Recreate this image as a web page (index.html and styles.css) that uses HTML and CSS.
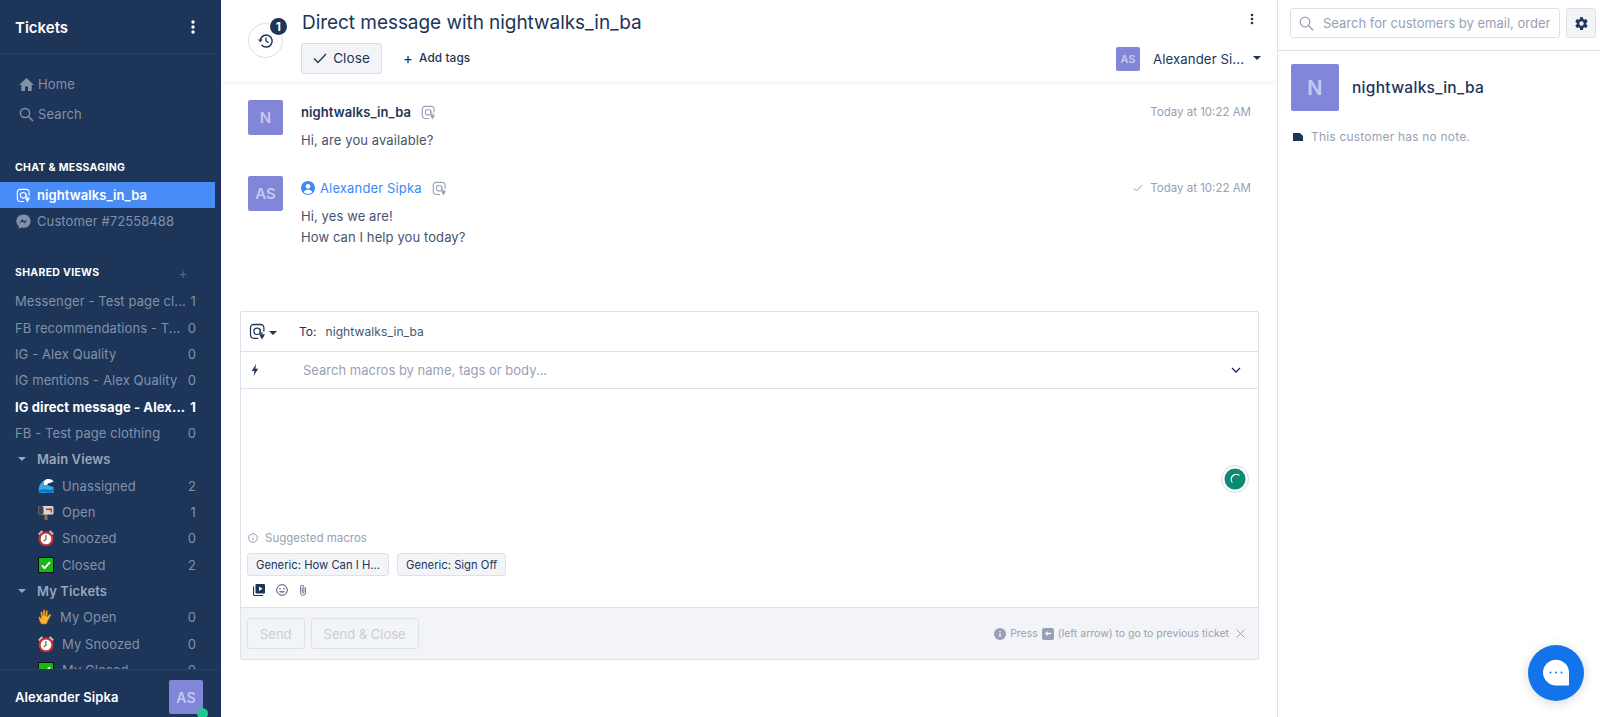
FILE: index.html
```html
<!DOCTYPE html>
<html lang="en">
<head>
<meta charset="utf-8">
<title>Tickets</title>
<link rel="stylesheet" href="styles.css">
</head>
<body>
<svg class="defs" width="0" height="0" aria-hidden="true">
  <symbol id="ig" viewBox="0 0 16 16">
    <path d="M8.600 14.400H4.400a3 3 0 0 1-3-3V4.400a3 3 0 0 1 3-3h6.600a3 3 0 0 1 3 3V8" fill="none" stroke="currentColor" stroke-width="1.200"/>
    <circle cx="7.600" cy="7.800" r="3" fill="none" stroke="currentColor" stroke-width="1.100"/>
    <path d="M10.600 5.500v3.400c0 1.300 2 1.300 2-.3" fill="none" stroke="currentColor" stroke-width="1"/>
    <path d="M9.500 10.500h5.500l-2.700 5z" fill="currentColor"/>
  </symbol>
  <symbol id="clock" viewBox="0 0 18 18">
    <path d="M1 5l4-4M17 5l-4-4" stroke="#c3c7cf" stroke-width="2.400"/>
    <circle cx="9" cy="10" r="7.200" fill="#fff" stroke="#d12f2f" stroke-width="2.400"/>
    <path d="M9 5.500V10l-2.500 2.500" stroke="#555" stroke-width="1.300" fill="none"/>
  </symbol>
  <symbol id="check" viewBox="0 0 16 16">
    <rect width="16" height="16" fill="#0a0f14"/>
    <rect x="1" y="1" width="14" height="14" fill="#16b816"/>
    <path d="M4 8.500l2.600 2.600L12 5.200" fill="none" stroke="#fff" stroke-width="1.900"/>
  </symbol>
</svg>

<div class="app">
  <aside class="sidebar">
    <header class="side-head">
      <h1>Tickets</h1>
      <svg class="kebab" width="4" height="14" viewBox="0 0 4 14"><circle cx="2" cy="2" r="1.700"/><circle cx="2" cy="7" r="1.700"/><circle cx="2" cy="12" r="1.700"/></svg>
    </header>
    <div class="side-scroll">
      <nav class="side-nav">
        <a class="nav-row"><svg width="15" height="13" viewBox="0 0 16 14"><path d="M6.400 14V9.200h3.200V14h4V7.500H16L8 0 0 7.500h2.400V14z" fill="currentColor"/></svg>Home</a>
        <a class="nav-row"><svg width="15" height="15" viewBox="0 0 15 15"><circle cx="6" cy="6" r="4.600" fill="none" stroke="currentColor" stroke-width="1.500"/><path d="M9.500 9.500l4.500 4.500" stroke="currentColor" stroke-width="1.600"/></svg>Search</a>
      </nav>

      <h2 class="section-title first">CHAT &amp; MESSAGING</h2>
      <a class="chat-row active"><svg class="chat-ico" width="15" height="15"><use href="#ig"/></svg>nightwalks_in_ba</a>
      <a class="chat-row"><svg class="chat-ico" width="15" height="15" viewBox="0 0 16 16"><path d="M8 .5C3.700.5.400 3.600.400 7.600c0 2.200 1 4 2.600 5.300V15.600l2.400-1.300c.8.2 1.700.4 2.600.4 4.300 0 7.600-3.100 7.600-7.100S12.300.5 8 .5z" fill="currentColor"/><path d="M3.400 10l3.200-4.400 2.400 2.200 2.800-2.200L9.400 10 7 7.900z" fill="#1c3559"/></svg>Customer #72558488</a>

      <h2 class="section-title second">SHARED VIEWS<span class="plus">+</span></h2>
      <ul class="views">
        <li class="view"><span class="view-name">Messenger - Test page cl...</span><span class="count">1</span></li>
        <li class="view"><span class="view-name">FB recommendations - T...</span><span class="count">0</span></li>
        <li class="view"><span class="view-name">IG - Alex Quality</span><span class="count">0</span></li>
        <li class="view"><span class="view-name">IG mentions - Alex Quality</span><span class="count">0</span></li>
        <li class="view strong"><span class="view-name">IG direct message - Alex...</span><span class="count">1</span></li>
        <li class="view"><span class="view-name">FB - Test page clothing</span><span class="count">0</span></li>
        <li class="view group"><i class="caret"></i>Main Views</li>
        <li class="view sub">
          <svg class="emoji" width="16" height="16" viewBox="0 0 16 16"><path d="M1 15C-.5 8 4 1 11 1c2.500 0 4.500 1 4.500 3L12 3.500c-2 0-3.500 1.500-3 3.500l6.500 2V15z" fill="#35a8e6"/><path d="M8 1.500c2-.8 5-.6 7.500 2L12 5C10 5 9 6 9.500 7L6 7C5.500 4.500 6 2.500 8 1.500z" fill="#fff"/><path d="M1 15c3-1 5-1 7-.5s5 .5 7.500-.5V11c-3 1.500-5 1-7 .5S3 11 1 13z" fill="#0f72bd"/></svg>
          <span class="view-name">Unassigned</span><span class="count">2</span></li>
        <li class="view sub">
          <svg class="emoji" width="16" height="16" viewBox="0 0 16 16"><rect x="6.500" y="8" width="3" height="8" fill="#9b6a3c"/><rect x=".5" y="2" width="15" height="8.500" rx="1.500" fill="#d5d9de"/><rect x=".5" y="2" width="5" height="8.500" rx="2" fill="#3d4249"/><rect x="8" y="4.500" width="6" height="1.600" fill="#d92c2c"/><rect x="12.500" y="4.500" width="1.600" height="4" fill="#d92c2c"/></svg>
          <span class="view-name">Open</span><span class="count">1</span></li>
        <li class="view sub"><svg class="emoji" width="16" height="16"><use href="#clock"/></svg><span class="view-name">Snoozed</span><span class="count">0</span></li>
        <li class="view sub"><svg class="emoji" width="16" height="16"><use href="#check"/></svg><span class="view-name">Closed</span><span class="count">2</span></li>
        <li class="view group"><i class="caret"></i>My Tickets</li>
        <li class="view sub tight">
          <svg class="emoji" width="15" height="16" viewBox="0 0 15 16"><path d="M3.500 15C1.500 12.500 1 10 .8 8.500c0-1 1.200-1 1.600-.2l1 1.700L2.800 3.500c0-1 1.300-1.100 1.500-.1L5 7l.3-5.600c.1-1 1.500-1 1.600 0L7.200 7l1-4.900c.2-1 1.500-.8 1.500.2L9 8l2.300-2.500c.8-.8 2 0 1.400 1L10 11.500 8.500 15z" fill="#f7b531" stroke="#a8641a" stroke-width=".6"/></svg>
          <span class="view-name">My Open</span><span class="count">0</span></li>
        <li class="view sub"><svg class="emoji" width="16" height="16"><use href="#clock"/></svg><span class="view-name">My Snoozed</span><span class="count">0</span></li>
        <li class="view sub"><svg class="emoji" width="16" height="16"><use href="#check"/></svg><span class="view-name">My Closed</span><span class="count">0</span></li>
      </ul>
    </div>
    <footer class="side-foot">
      <span class="me">Alexander Sipka</span>
      <span class="avatar av-foot">AS<i class="online"></i></span>
    </footer>
  </aside>

  <main class="main">
    <header class="ticket-head">
      <div class="history">
        <svg width="16" height="16" viewBox="0 0 16 16"><path d="M2.300 6.800A6 6 0 1 1 3.600 12" fill="none" stroke="#1c3559" stroke-width="1.500"/><path d="M0 6.500h4.600L2.300 9.300z" fill="#1c3559"/><path d="M8 4.500V8l2.600 1.600" fill="none" stroke="#1c3559" stroke-width="1.300"/></svg>
        <span class="badge">1</span>
      </div>
      <div class="head-body">
        <div class="head-top">
          <h2 class="ticket-title">Direct message with nightwalks_in_ba</h2>
          <svg class="kebab-dark" width="4" height="12" viewBox="0 0 4 12"><circle cx="2" cy="2" r="1.300"/><circle cx="2" cy="6" r="1.300"/><circle cx="2" cy="10" r="1.300"/></svg>
        </div>
        <div class="head-bottom">
          <button class="btn-close"><svg width="14" height="11" viewBox="0 0 14 11"><path d="M1 5.500l4 4L13 1" fill="none" stroke="#1c3559" stroke-width="1.300"/></svg>Close</button>
          <span class="add-tags"><span class="add-plus">+</span>Add tags</span>
          <span class="assignee"><span class="avatar av-small">AS</span><span class="assignee-name">Alexander Si...</span><i class="caret dark"></i></span>
        </div>
      </div>
    </header>

    <section class="messages">
      <article class="msg">
        <span class="avatar av-msg">N</span>
        <div class="msg-body">
          <div class="msg-head">
            <span class="author">nightwalks_in_ba</span>
            <svg class="src" width="15" height="15"><use href="#ig"/></svg>
            <span class="time">Today at 10:22 AM</span>
          </div>
          <p class="msg-text">Hi, are you available?</p>
        </div>
      </article>
      <article class="msg">
        <span class="avatar av-msg">AS</span>
        <div class="msg-body">
          <div class="msg-head">
            <svg class="agent-ico" width="14" height="14" viewBox="0 0 14 14"><circle cx="7" cy="7" r="7" fill="#3b89f5"/><circle cx="7" cy="5.300" r="2.400" fill="#fff"/><path d="M2.700 11.200c.8-2 2.400-2.800 4.300-2.800s3.500.8 4.300 2.800A6 6 0 0 1 7 13a6 6 0 0 1-4.300-1.800z" fill="#fff"/></svg>
            <span class="author agent">Alexander Sipka</span>
            <svg class="src" width="15" height="15"><use href="#ig"/></svg>
            <svg class="sent" width="10" height="8" viewBox="0 0 10 8"><path d="M.8 4.200l2.800 2.800L9.200.8" fill="none" stroke="#97a1b3" stroke-width="1"/></svg>
            <span class="time with-check">Today at 10:22 AM</span>
          </div>
          <p class="msg-text">Hi, yes we are!<br>How can I help you today?</p>
        </div>
      </article>
    </section>

    <section class="editor">
      <div class="ed-row ed-to">
        <svg class="ed-ig" width="17" height="17"><use href="#ig"/></svg><i class="caret dark"></i>
        <span class="to-label">To:</span><span class="to-name">nightwalks_in_ba</span>
      </div>
      <div class="ed-row ed-macro">
        <svg class="bolt" width="8" height="12" viewBox="0 0 8 12"><path d="M5 0L.8 7h2.700L2.600 12 7.200 4.700H4.400z" fill="#1c3559"/></svg>
        <span class="macro-ph">Search macros by name, tags or body...</span>
        <svg class="chev" width="10" height="6" viewBox="0 0 10 6"><path d="M1 1l4 4 4-4" fill="none" stroke="#1c3559" stroke-width="1.300"/></svg>
      </div>
      <div class="ed-body">
        <div class="ed-space">
          <span class="grammarly"><svg width="22" height="22" viewBox="0 0 22 22"><circle cx="11" cy="11" r="10.500" fill="#0b8a73"/><path d="M15 7.200A5 5 0 0 0 7.300 10c-.4 1.500 0 3 .7 4" fill="none" stroke="#fff" stroke-width="1.200" stroke-linecap="round"/></svg></span>
        </div>
        <div class="suggested"><svg width="10" height="10" viewBox="0 0 10 10"><circle cx="5" cy="5" r="4.300" fill="none" stroke="#97a1b3"/><path d="M5 4.400v3M5 2.400v1" stroke="#97a1b3"/></svg>Suggested macros</div>
        <div class="chips"><span class="chip">Generic: How Can I H...</span><span class="chip">Generic: Sign Off</span></div>
        <div class="tools">
          <svg width="12" height="12" viewBox="0 0 12 12"><rect x="2.500" width="9.500" height="9.500" rx="1.200" fill="#1c3559"/><path d="M6 2.500v4.500L9.600 4.700z" fill="#fff"/><path d="M.6 2.500v8a1 1 0 0 0 1 1H10" fill="none" stroke="#1c3559" stroke-width="1.100"/></svg>
          <svg width="12" height="12" viewBox="0 0 12 12"><circle cx="6" cy="6" r="5.300" fill="none" stroke="#44546f"/><circle cx="4" cy="4.700" r=".8" fill="#44546f"/><circle cx="8" cy="4.700" r=".8" fill="#44546f"/><path d="M3 7.200c.8 1.800 5.200 1.800 6 0z" fill="#44546f"/></svg>
          <svg width="8" height="12" viewBox="0 0 8 12"><path d="M6.500 3.500v5.300a2.500 2.500 0 0 1-5 0V3a1.700 1.700 0 0 1 3.400 0v5.300a.8.800 0 0 1-1.600 0V3.500" fill="none" stroke="#6b7a92"/></svg>
        </div>
      </div>
      <div class="ed-foot">
        <button class="btn-ghost">Send</button>
        <button class="btn-ghost">Send &amp; Close</button>
        <div class="hint">
          <svg width="12" height="12" viewBox="0 0 12 12"><circle cx="6" cy="6" r="6" fill="#97a1b3"/><path d="M6 5.200v3.600M6 3v1.300" stroke="#fff" stroke-width="1.200"/></svg>
          <span>Press</span>
          <span class="key"><svg width="6" height="5" viewBox="0 0 6 5"><path d="M0 2.500L2.500 0v1.800H6v1.400H2.500V5z" fill="#fff"/></svg></span>
          <span>(left arrow) to go to previous ticket</span>
          <svg class="hint-x" width="9" height="9" viewBox="0 0 9 9"><path d="M.5.500l8 8M8.500.500l-8 8" stroke="#97a1b3" stroke-width="1"/></svg>
        </div>
      </div>
    </section>
  </main>

  <aside class="customer">
    <div class="cust-search">
      <label class="search-box"><svg width="15" height="15" viewBox="0 0 15 15"><circle cx="6" cy="6" r="4.800" fill="none" stroke="#97a1b3" stroke-width="1.300"/><path d="M9.500 9.500l4.700 4.700" stroke="#97a1b3" stroke-width="1.400"/></svg><span class="search-ph">Search for customers by email, order</span></label>
      <span class="gear"><svg width="15" height="15" viewBox="0 0 24 24"><path d="M19.400 13a7.500 7.500 0 0 0 0-2l2.500-2-2.500-4.300-3 1.200a7.500 7.500 0 0 0-1.700-1L14.300 1.800H9.700L9.300 5a7.500 7.500 0 0 0-1.700 1l-3-1.200L2.100 9l2.500 2a7.500 7.500 0 0 0 0 2l-2.500 2 2.500 4.300 3-1.200c.5.400 1.100.7 1.700 1l.4 3.200h4.600l.4-3.200c.6-.3 1.200-.6 1.700-1l3 1.200 2.500-4.300zM12 15.500a3.500 3.500 0 1 1 0-7 3.500 3.500 0 0 1 0 7z" fill="#1c3559"/></svg></span>
    </div>
    <div class="cust-card">
      <span class="avatar av-cust">N</span>
      <span class="cust-name">nightwalks_in_ba</span>
    </div>
    <p class="cust-note"><svg width="10" height="8" viewBox="0 0 10 8"><path d="M0 0h7l3 3v5H0z" fill="#1c3559"/></svg>This customer has no note.</p>
  </aside>
</div>

<button class="fab" aria-label="Chat"><svg width="28" height="28" viewBox="0 0 28 28"><path d="M14 .8C6.800.8 1 6.500 1 13.600S6.800 26.500 14 26.500h13v-13C27 6.500 21.200.8 14 .8z" fill="#fff"/><circle cx="8.500" cy="13.500" r="1" fill="#1273ea"/><circle cx="14" cy="13.500" r="1" fill="#1273ea"/><circle cx="19.500" cy="13.500" r="1" fill="#1273ea"/></svg></button>
</body>
</html>
```

FILE: styles.css
```css
* { box-sizing: border-box; }
html, body { margin: 0; height: 717px; overflow: hidden; }
body { font-family: Inter, "Liberation Sans", sans-serif; font-size: 13px; letter-spacing: .1px; color: #1c3559; background: #fff; }
.defs { position: absolute; }
h1, h2, p, ul { margin: 0; padding: 0; }
button { font-family: inherit; letter-spacing: inherit; }
.app { display: flex; height: 717px; }

.avatar { display: flex; align-items: center; justify-content: center; background: #8186d8; color: #c6c9ef; font-weight: 600; border-radius: 2px; flex: none; }

/* Sidebar */
.sidebar { width: 221px; flex: none; height: 717px; background: #1c3559; border-right: 1px solid #1f2a6b; display: flex; flex-direction: column; color: #8391a8; }
.side-head { height: 54px; flex: none; display: flex; align-items: center; justify-content: space-between; padding: 0 25px 0 15px; border-bottom: 1px solid #263f66; }
.side-head h1 { font-size: 15px; font-weight: 600; color: #fff; letter-spacing: 0; margin-top: 1px; }
.kebab { fill: #fff; }
.side-scroll { flex: 1; min-height: 0; overflow: hidden; }
.side-nav { padding-top: 15px; display: flex; flex-direction: column; }
.nav-row { height: 30px; display: flex; align-items: center; gap: 4px; padding-left: 19px; }
.section-title { font-size: 10.500px; font-weight: 700; letter-spacing: .3px; color: #fff; display: flex; justify-content: space-between; align-items: center; padding: 0 32px 0 15px; }
.section-title.first { margin-top: 29px; height: 18px; }
.section-title.second { margin-top: 29px; height: 18px; }
.plus { color: #52678a; font-weight: 400; font-size: 14px; }
.chat-row { display: flex; align-items: center; height: 26px; margin-right: 5px; padding-left: 16px; gap: 6px; }
.chat-row.active { background: #4a8cf7; color: #fff; font-weight: 600; margin-top: 6px; }
.chat-ico { flex: none; }
.views { list-style: none; margin-top: 7px; }
.view { height: 26.350px; display: flex; align-items: center; padding: 0 24px 0 15px; }
.view-name { flex: 1; min-width: 0; padding-right: 5px; white-space: nowrap; }
.count { flex: none; }
.view.strong { color: #fff; font-weight: 700; }
.view.group { font-weight: 600; gap: 11px; padding-left: 18px; color: #9aa6ba; }
.view.sub { padding-left: 38px; gap: 8px; }
.view.sub.tight { gap: 7px; }
.emoji { flex: none; }
.caret { display: inline-block; width: 0; height: 0; border-left: 4px solid transparent; border-right: 4px solid transparent; border-top: 4px solid currentColor; }
.caret.dark { color: #1c3559; }
.side-foot { height: 48px; flex: none; display: flex; align-items: flex-end; justify-content: space-between; padding: 0 17px 3px 15px; border-top: 1px solid #263f66; background: #1c3559; }
.me { font-weight: 600; color: #fff; line-height: 34px; }
.av-foot { position: relative; width: 34px; height: 34px; font-size: 14px; }
.online { position: absolute; right: -5px; bottom: -5px; width: 11px; height: 11px; border-radius: 50%; background: #1ec794; }

/* Main */
.main { flex: 1; min-width: 0; display: flex; flex-direction: column; }
.ticket-head { height: 81px; flex: none; display: flex; padding: 0 16px 0 27px; box-shadow: 0 2px 6px rgba(28, 53, 89, .06); }
.history { position: relative; width: 35px; height: 35px; margin-top: 23px; border: 1px solid #d9dde6; border-radius: 50%; display: flex; align-items: center; justify-content: center; flex: none; }
.badge { position: absolute; top: -6px; right: -5px; width: 17px; height: 17px; border-radius: 50%; background: #1c3559; color: #fff; font-size: 12px; font-weight: 700; display: flex; align-items: center; justify-content: center; }
.head-body { flex: 1; margin-left: 18px; display: flex; flex-direction: column; }
.head-top { height: 43px; display: flex; align-items: flex-start; justify-content: space-between; }
.ticket-title { font-size: 19px; font-weight: 400; line-height: 24px; margin: 11px 0 0 1px; letter-spacing: -.05px; }
.kebab-dark { fill: #1c3559; margin-top: 13px; margin-right: 7px; }
.head-bottom { display: flex; align-items: center; height: 30px; }
.btn-close { height: 31px; width: 81px; display: flex; align-items: center; justify-content: center; gap: 6px; background: #f3f4f7; border: 1px solid #d9dde6; border-radius: 3px; color: #1c3559; font-size: 13.500px; padding: 0; }
.add-tags { margin-left: 21px; font-size: 11.800px; font-weight: 500; display: flex; align-items: center; gap: 6px; }
.add-plus { font-size: 15px; font-weight: 400; line-height: 1; }
.assignee { margin-left: auto; display: flex; align-items: center; margin-top: 2px; }
.av-small { width: 24px; height: 24px; font-size: 11px; }
.assignee-name { margin-left: 13px; width: 89px; white-space: nowrap; font-size: 13.200px; }
.assignee .caret { margin-left: 11px; margin-top: -3px; }

.messages { flex: 1; min-height: 0; padding: 19px 26px 0 27px; }
.msg { display: flex; gap: 18px; margin-bottom: 26px; }
.av-msg { width: 35px; height: 35px; font-size: 15px; }
.msg-body { flex: 1; }
.msg-head { display: flex; align-items: center; height: 24px; }
.author { font-weight: 600; }
.author.agent { color: #3b89f5; font-weight: 400; letter-spacing: .15px; margin-left: 5px; }
.src { color: #97a1b3; margin-left: 10px; }
.time { margin-left: auto; font-size: 11.500px; color: #97a1b3; letter-spacing: 0; }
.sent { margin-left: auto; }
.time.with-check { margin-left: 7px; }
.msg-text { line-height: 20.400px; color: #44546f; margin-top: 6px; }

.editor { flex: none; height: 349px; margin: 0 18px 57px 19px; border: 1px solid #dee1e9; border-radius: 2px; display: flex; flex-direction: column; }
.ed-row { display: flex; align-items: center; flex: none; border-bottom: 1px solid #dee1e9; padding-left: 8px; }
.ed-to { height: 40px; }
.ed-ig { color: #1c3559; }
.ed-to .caret { margin-left: 3px; margin-top: 3px; }
.to-label { margin-left: 22px; font-size: 12px; letter-spacing: 0; }
.to-name { margin-left: 9px; font-size: 12px; color: #44546f; }
.ed-macro { height: 37px; padding-right: 17px; }
.bolt { margin-left: 2px; }
.macro-ph { margin-left: 44px; color: #97a1b3; flex: 1; letter-spacing: 0; }
.ed-body { flex: 1; min-height: 0; padding: 0 6px; display: flex; flex-direction: column; }
.ed-space { flex: 1; position: relative; display: flex; align-items: flex-end; justify-content: flex-end; padding: 0 3px 38px 0; }
.grammarly { width: 28px; height: 28px; border: 1px solid #d5d8e6; border-radius: 50%; display: flex; align-items: center; justify-content: center; }
.suggested { display: flex; align-items: center; gap: 7px; font-size: 11.500px; color: #97a1b3; height: 14px; letter-spacing: 0; padding-left: 1px; }
.chips { display: flex; gap: 8px; margin-top: 8px; }
.chip { height: 23px; padding: 0 8px; display: flex; align-items: center; background: #f3f4f7; border: 1px solid #dee1e9; border-radius: 3px; font-size: 11.250px; letter-spacing: 0; color: #1c3559; }
.tools { display: flex; align-items: center; gap: 11px; height: 28px; margin-bottom: 3px; padding-left: 6px; }
.ed-foot { height: 52px; flex: none; display: flex; align-items: center; gap: 6px; padding: 0 13px 0 6px; background: #f3f4f7; border-top: 1px solid #dee1e9; }
.btn-ghost { height: 31px; padding: 0 12px; background: transparent; border: 1px solid #dee1e9; border-radius: 3px; color: #c8cdd8; font-size: 13px; letter-spacing: 0; }
.hint { margin-left: auto; display: flex; align-items: center; gap: 4px; font-size: 10.500px; letter-spacing: 0; color: #97a1b3; }
.key { width: 12px; height: 12px; background: #97a1b3; border-radius: 2px; display: flex; align-items: center; justify-content: center; }
.hint-x { margin-left: 3px; }

/* Customer panel */
.customer { width: 323px; flex: none; border-left: 1px solid #dee1e9; }
.cust-search { height: 51px; display: flex; align-items: flex-start; gap: 6px; padding: 8px 4px 0 12px; border-bottom: 1px solid #dee1e9; }
.search-box { flex: 1; height: 30px; display: flex; align-items: center; gap: 9px; padding: 0 8px; border: 1px solid #dee1e9; border-radius: 3px; overflow: hidden; }
.search-ph { color: #97a1b3; white-space: nowrap; overflow: hidden; letter-spacing: 0; }
.gear { width: 30px; height: 30px; background: #f3f4f7; border: 1px solid #dee1e9; border-radius: 3px; display: flex; align-items: center; justify-content: center; flex: none; }
.cust-card { display: flex; align-items: center; gap: 13px; padding: 13px 0 0 13px; }
.av-cust { width: 48px; height: 47px; font-size: 20px; }
.cust-name { font-size: 15.500px; font-weight: 500; letter-spacing: .3px; }
.cust-note { display: flex; align-items: center; gap: 8px; padding: 18px 0 0 15px; font-size: 12px; color: #97a1b3; letter-spacing: .2px; }

.fab { position: fixed; left: 1528px; top: 645px; width: 56px; height: 56px; border: 0; padding: 0; border-radius: 50%; background: #1273ea; box-shadow: 0 2px 12px rgba(0, 0, 0, .16); display: flex; align-items: center; justify-content: center; }
```
